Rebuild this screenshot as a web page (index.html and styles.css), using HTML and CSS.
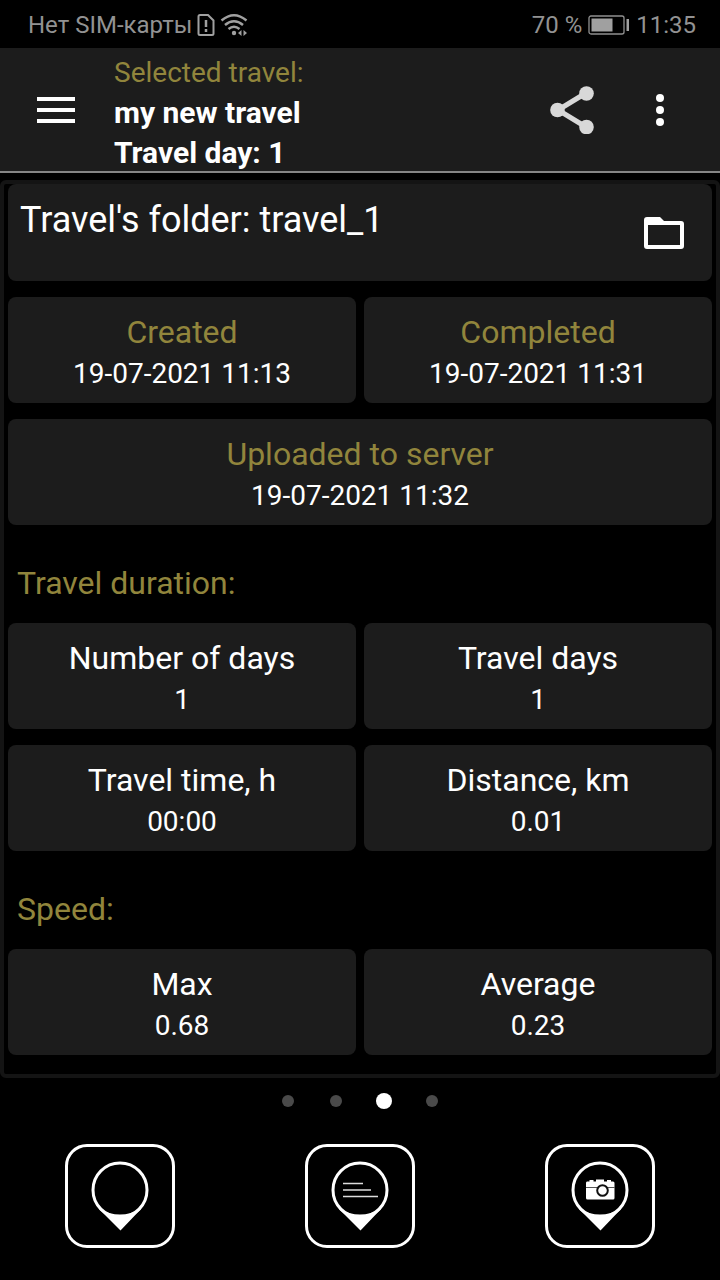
FILE: index.html
```
<!DOCTYPE html>
<html lang="en">
<head>
    <meta charset="UTF-8">
    <meta name="viewport" content="width=device-width, initial-scale=1.0">
    <title>my new travel</title>
    <link rel="stylesheet" href="styles.css">
</head>
<body>
    <div class="status">
        <span>Нет SIM-карты</span>
        <svg class="sim" width="18" height="24" viewBox="0 0 18 24" fill="none" stroke="#a0a0a0" stroke-width="2">
            <path d="M3 2h8l5.500 5.500v13a1.500 1.500 0 0 1-1.500 1.500H3a1.500 1.500 0 0 1-1.500-1.500v-17A1.500 1.500 0 0 1 3 2z"/>
            <path d="M9 7v7M9 16v3" stroke-width="2.500"/>
        </svg>
        <svg class="wifi" width="28" height="24" viewBox="0 0 28 24" fill="none" stroke="#a0a0a0" stroke-width="2.500">
            <path d="M1.500 7.500Q14-3 26.500 7.500"/>
            <path d="M5 12q9-7.500 18 0"/>
            <path d="M8.500 16q5.500-4.500 11 0"/>
            <circle cx="14" cy="20" r="2.200" fill="#a0a0a0" stroke="none"/>
            <path d="M21.500 17v6l-3.500-3zM23.500 17v6l3.500-3z" fill="#a0a0a0" stroke="none"/>
        </svg>
        <span class="battery-text">70 %</span>
        <svg class="battery" width="42" height="20" viewBox="0 0 42 20">
            <rect x="1" y="1" width="35" height="18" rx="2" fill="none" stroke="#909090" stroke-width="1.300"/>
            <rect x="3.500" y="3.500" width="21" height="13" fill="#a0a0a0"/>
            <rect x="38.500" y="4" width="2.500" height="12" fill="#a0a0a0"/>
        </svg>
        <span>11:35</span>
    </div>

    <header class="toolbar">
        <button class="icon-button menu" aria-label="Menu">
            <svg width="38" height="28" viewBox="0 0 38 28" stroke="#fff" stroke-width="4">
                <path d="M0 3h38M0 14h38M0 25h38"/>
            </svg>
        </button>
        <div class="toolbar-title">
            <div class="label">Selected travel:</div>
            <h1>my new travel</h1>
            <h2>Travel day: 1</h2>
        </div>
        <button class="icon-button share" aria-label="Share">
            <svg width="44" height="48" viewBox="0 0 44 48" fill="#d8d8d8">
                <path d="M36 7L8 24l28 17" fill="none" stroke="#d8d8d8" stroke-width="5"/>
                <circle cx="36.500" cy="7.500" r="7.300"/>
                <circle cx="7.500" cy="24" r="7.300"/>
                <circle cx="36.500" cy="41" r="7.300"/>
            </svg>
        </button>
        <button class="icon-button more" aria-label="More options">
            <svg width="8" height="34" viewBox="0 0 8 34" fill="#fff">
                <circle cx="4" cy="5" r="4"/>
                <circle cx="4" cy="17" r="4"/>
                <circle cx="4" cy="29" r="4"/>
            </svg>
        </button>
    </header>

    <main class="panel">
        <div class="card folder">
            <span>Travel's folder: travel_1</span>
            <button class="icon-button" aria-label="Open folder">
                <svg width="40" height="34" viewBox="0 0 40 34">
                    <path fill="#fff" fill-rule="evenodd" d="M3 1h13l4 4h17a3 3 0 0 1 3 3v22a3 3 0 0 1-3 3H3a3 3 0 0 1-3-3V4a3 3 0 0 1 3-3zM4 9v20h32V9z"/>
                </svg>
            </button>
        </div>

        <div class="cards">
            <div class="card">
                <div class="name label">Created</div>
                <div class="value">19-07-2021 11:13</div>
            </div>
            <div class="card">
                <div class="name label">Completed</div>
                <div class="value">19-07-2021 11:31</div>
            </div>
            <div class="card wide">
                <div class="name label">Uploaded to server</div>
                <div class="value">19-07-2021 11:32</div>
            </div>
        </div>

        <h3 class="section label">Travel duration:</h3>
        <div class="cards">
            <div class="card">
                <div class="name">Number of days</div>
                <div class="value">1</div>
            </div>
            <div class="card">
                <div class="name">Travel days</div>
                <div class="value">1</div>
            </div>
            <div class="card">
                <div class="name">Travel time, h</div>
                <div class="value">00:00</div>
            </div>
            <div class="card">
                <div class="name">Distance, km</div>
                <div class="value">0.01</div>
            </div>
        </div>

        <h3 class="section label">Speed:</h3>
        <div class="cards">
            <div class="card">
                <div class="name">Max</div>
                <div class="value">0.68</div>
            </div>
            <div class="card">
                <div class="name">Average</div>
                <div class="value">0.23</div>
            </div>
        </div>
    </main>

    <nav class="dots" aria-label="Pages">
        <button aria-label="Page 1"></button>
        <button aria-label="Page 2"></button>
        <button class="active" aria-label="Page 3"></button>
        <button aria-label="Page 4"></button>
    </nav>

    <footer class="actions">
        <button aria-label="Add point">
            <svg width="60" height="72" viewBox="0 0 60 72">
                <circle cx="30" cy="30" r="27" fill="none" stroke="#fff" stroke-width="3"/>
                <path d="M8.500 48.500Q30 60.500 51.500 48.500L30.500 70.500z" fill="#fff"/>
            </svg>
        </button>
        <button aria-label="Add note">
            <svg width="60" height="72" viewBox="0 0 60 72">
                <circle cx="30" cy="30" r="27" fill="none" stroke="#fff" stroke-width="3"/>
                <path d="M8.500 48.500Q30 60.500 51.500 48.500L30.500 70.500z" fill="#fff"/>
                <path d="M13 23.500h20M13 30h28M13 36.500h35" stroke="#ddd" stroke-width="1.700"/>
            </svg>
        </button>
        <button aria-label="Add photo">
            <svg width="60" height="72" viewBox="0 0 60 72">
                <circle cx="30" cy="30" r="27" fill="none" stroke="#fff" stroke-width="3"/>
                <path d="M8.500 48.500Q30 60.500 51.500 48.500L30.500 70.500z" fill="#fff"/>
                <path d="M17 21.500h2.500v-1.500h4v1.500h2.500v-2h8v2h3v-1.500h4v1.500h2q1.500 0 1.500 1.500v15q0 1.500-1.500 1.500H17.500q-1.500 0-1.500-1.500V23q0-1.500 1-1.500z" fill="#fff"/>
                <path d="M16 27.500h29" stroke="#555"/>
                <circle cx="32.500" cy="30.500" r="5.300" fill="#fff" stroke="#111" stroke-width="2"/>
            </svg>
        </button>
    </footer>
</body>
</html>
```
FILE: styles.css
```
* {
    box-sizing: border-box;
}
body {
    margin: 0;
    background-color: #000;
    color: #fff;
    font-family: Roboto, sans-serif;
}
h1, h2, h3 {
    margin: 0;
}
button {
    border: 0;
    padding: 0;
    background: none;
    cursor: pointer;
}
svg {
    display: block;
}
.label {
    color: #91853c;
}
.status {
    display: flex;
    align-items: center;
    height: 48px;
    padding: 2px 24px 0 28px;
    font-size: 24px;
    color: #929292;
}
.sim {
    margin: 0 5px;
}
.battery-text {
    margin-left: auto;
}
.battery {
    margin: 0 6px;
}
.toolbar {
    display: flex;
    align-items: center;
    height: 125px;
    padding-right: 56px;
    background-color: #1c1c1c;
    border-bottom: 2px solid #858585;
}
.menu {
    padding: 0 39px 0 37px;
}
.toolbar-title {
    flex-grow: 1;
    padding-top: 6px;
    font-size: 28px;
    line-height: 40px;
}
.toolbar-title h1, .toolbar-title h2 {
    font-size: 30px;
    font-weight: 700;
}
.more {
    margin-left: 62px;
}
.panel {
    margin-top: 7px;
    padding: 0 4px 19px;
    border: 4px solid #141414;
    border-radius: 6px;
}
.card {
    padding: 15px 8px 9px;
    background-color: #1c1c1c;
    border-radius: 8px;
    text-align: center;
    line-height: 40px;
}
.folder {
    display: flex;
    justify-content: space-between;
    align-items: flex-start;
    margin-bottom: 16px;
    padding: 16px 28px 41px 12px;
    font-size: 36px;
}
.folder .icon-button {
    margin-top: 16px;
    height: 22px;
}
.cards {
    display: grid;
    grid-template-columns: 1fr 1fr;
    gap: 16px 8px;
}
.wide {
    grid-column: span 2;
}
.name {
    font-size: 32px;
}
.value {
    margin-top: 2px;
    font-size: 28px;
}
.section {
    padding: 38px 9px 20px;
    font-size: 32px;
    font-weight: 400;
    line-height: 40px;
}
.dots {
    display: flex;
    justify-content: center;
    align-items: center;
    height: 46px;
}
.dots button {
    width: 12px;
    height: 12px;
    margin: 0 18px;
    border-radius: 50%;
    background-color: #4a4a4a;
}
.dots .active {
    width: 16px;
    height: 16px;
    margin: 0 16px;
    background-color: #fff;
}
.actions {
    display: grid;
    grid-template-columns: 1fr 1fr 1fr;
    justify-items: center;
    padding: 20px 0 32px;
}
.actions button {
    padding: 13px 22px;
    border: 3px solid #fff;
    border-radius: 22px;
}
```
